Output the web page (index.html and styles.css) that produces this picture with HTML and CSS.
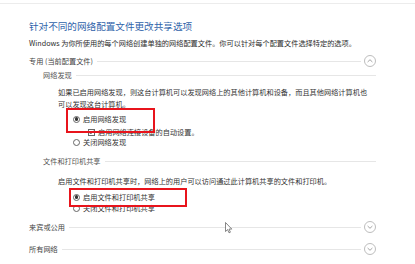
FILE: index.html
```html
<!DOCTYPE html>
<html lang="zh-CN">
<head>
<meta charset="utf-8">
<title>高级共享设置</title>
<link rel="stylesheet" href="styles.css">
</head>
<body>
<div class="page">
  <div class="topline"></div>
  <div class="content">
    <h1 class="title">针对不同的网络配置文件更改共享选项</h1>
    <p class="desc">Windows 为你所使用的每个网络创建单独的网络配置文件。你可以针对每个配置文件选择特定的选项。</p>

    <div class="group-head first">
      <span class="group-label">专用 (当前配置文件)</span>
      <span class="rule"></span>
      <span class="toggle up"><svg viewBox="0 0 12 12" width="12" height="12"><circle cx="6" cy="6" r="5.5" fill="none" stroke="#b5b5b5" stroke-width="0.9"/><path d="M3.6 7 L6 4.7 L8.4 7" fill="none" stroke="#9a9a9a" stroke-width="0.9"/></svg></span>
    </div>

    <div class="sub">
      <div class="sub-head s1"><span class="sub-label">网络发现</span><span class="rule"></span></div>
      <div class="body">
        <p class="para p1">如果已启用网络发现，则这台计算机可以发现网络上的其他计算机和设备，而且其他网络计算机也<br>可以发现这台计算机。</p>
        <div class="opt r1"><span class="radio on"></span><span>启用网络发现</span></div>
        <div class="opt chk"><span class="check"><svg viewBox="0 0 7 7" width="7" height="7"><path d="M1.4 3.6 L2.9 5.1 L5.8 1.6" fill="none" stroke="#444" stroke-width="0.9"/></svg></span><span>启用网络连接设备的自动设置。</span></div>
        <div class="opt r2"><span class="radio"></span><span>关闭网络发现</span></div>
      </div>

      <div class="sub-head s2"><span class="sub-label">文件和打印机共享</span><span class="rule"></span></div>
      <div class="body">
        <p class="para p2">启用文件和打印机共享时，网络上的用户可以访问通过此计算机共享的文件和打印机。</p>
        <div class="opt r3"><span class="radio on"></span><span>启用文件和打印机共享</span></div>
        <div class="opt r4"><span class="radio"></span><span>关闭文件和打印机共享</span></div>
      </div>
    </div>

    <div class="group-head g2">
      <span class="group-label">来宾或公用</span>
      <span class="rule"></span>
      <span class="toggle"><svg viewBox="0 0 12 12" width="12" height="12"><circle cx="6" cy="6" r="5.5" fill="none" stroke="#b5b5b5" stroke-width="0.9"/><path d="M3.6 5 L6 7.3 L8.4 5" fill="none" stroke="#9a9a9a" stroke-width="0.9"/></svg></span>
    </div>
    <div class="group-head g3">
      <span class="group-label">所有网络</span>
      <span class="rule"></span>
      <span class="toggle"><svg viewBox="0 0 12 12" width="12" height="12"><circle cx="6" cy="6" r="5.5" fill="none" stroke="#b5b5b5" stroke-width="0.9"/><path d="M3.6 5 L6 7.3 L8.4 5" fill="none" stroke="#9a9a9a" stroke-width="0.9"/></svg></span>
    </div>
  </div>

  <div class="highlight h1"></div>
  <div class="highlight h2"></div>
  <svg class="cursor" viewBox="0 0 8 12" width="8" height="12"><path d="M0.5 0.5 L0.5 9.5 L2.6 7.6 L4 10.8 L5.4 10.2 L4 7.1 L6.8 7.1 Z" fill="#fff" stroke="#555" stroke-width="0.7" stroke-linejoin="round"/></svg>
</div>
</body>
</html>
```

FILE: styles.css
```css
* { box-sizing: border-box; }
html, body { margin: 0; padding: 0; background: #ffffff; }
body {
  font-family: "Noto Sans CJK SC", "Noto Sans", "Liberation Sans", sans-serif;
  color: #333;
  width: 415px;
  height: 264px;
  overflow: hidden;
}
.page { position: relative; width: 415px; height: 264px; }
.topline { height: 4px; border-bottom: 1px solid #ececec; }
.content { padding-left: 29px; width: 376px; }
.title {
  margin: 15px 0 0;
  font-size: 9.6px;
  line-height: 14px;
  font-weight: normal;
  color: #2f63aa;
  white-space: nowrap;
}
.desc {
  margin: 4px 0 0;
  font-size: 7.2px;
  line-height: 12px;
  color: #2b2b2b;
  white-space: nowrap;
}
.group-head {
  display: flex;
  align-items: center;
  height: 14px;
  font-size: 7.2px;
  color: #444;
}
.group-head.first { margin-top: 5px; }
.group-head.g2 { margin-top: 7px; }
.group-head.g3 { margin-top: 8px; }
.group-label { white-space: nowrap; }
.rule { flex: 1; height: 1px; background: #e6e6e6; margin-left: 4px; }
.group-head .rule { margin-right: 3px; }
.toggle { width: 12px; height: 12px; display: flex; }
.sub { padding-left: 14px; }
.sub-head {
  display: flex;
  align-items: center;
  height: 12px;
  font-size: 7.2px;
  color: #555;
}
.sub-head.s1 { margin-top: 1px; }
.sub-head.s2 { margin-top: 8px; }
.body { padding-left: 15px; }
.para {
  margin: 0;
  font-size: 7.2px;
  line-height: 12px;
  color: #333;
  white-space: nowrap;
}
.para.p1 { margin-top: 5px; }
.para.p2 { margin-top: 8px; }
.opt {
  display: flex;
  align-items: center;
  gap: 3px;
  height: 10px;
  font-size: 7.2px;
  color: #333;
  white-space: nowrap;
}
.opt.r1 { margin-top: 4px; padding-left: 15px; }
.opt.chk { margin-top: 3px; padding-left: 30px; }
.opt.r2 { margin-top: 0; padding-left: 15px; }
.opt.r3 { margin-top: 5px; padding-left: 15px; }
.opt.r4 { margin-top: 1px; padding-left: 15px; }
.radio {
  width: 7px; height: 7px;
  border: 0.8px solid #666;
  border-radius: 50%;
  display: flex; align-items: center; justify-content: center;
  background: #fff;
}
.radio.on::after {
  content: "";
  width: 3.4px; height: 3.4px;
  border-radius: 50%;
  background: #333;
}
.check {
  width: 7px; height: 7px;
  border: 0.8px solid #666;
  display: flex; background: #fff;
}
.check svg { margin: -0.8px; }
.highlight {
  position: absolute;
  border: 2.4px solid #e8141c;
}
.highlight.h1 { left: 66px; top: 108px; width: 89px; height: 25px; }
.highlight.h2 { left: 69px; top: 188px; width: 118px; height: 19px; }
.cursor { position: absolute; left: 225px; top: 222px; }
```
